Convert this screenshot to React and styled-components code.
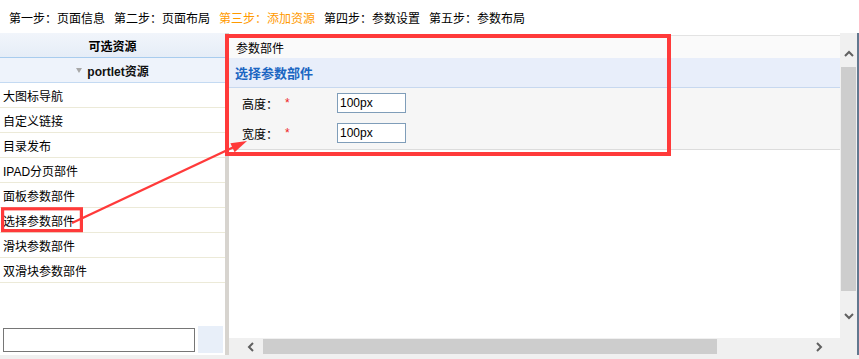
import styled, { createGlobalStyle } from "styled-components";

const GlobalStyle = createGlobalStyle`
  html, body {
    margin: 0;
    padding: 0;
    background: #fff;
  }
  body {
    font-family: "Liberation Sans", "Noto Sans CJK SC", sans-serif;
    font-size: 12px;
    color: #000;
  }
  * { box-sizing: border-box; }
`;

const steps = [
  { label: "第一步：页面信息" },
  { label: "第二步：页面布局" },
  { label: "第三步：添加资源", active: true },
  { label: "第四步：参数设置" },
  { label: "第五步：参数布局" },
];

const resources = [
  "大图标导航",
  "自定义链接",
  "目录发布",
  "IPAD分页部件",
  "面板参数部件",
  "选择参数部件",
  "滑块参数部件",
  "双滑块参数部件",
];

const fields = [
  { label: "高度：", value: "100px" },
  { label: "宽度：", value: "100px" },
];

const Chevron = ({ dir }) => {
  const pts = {
    up: "1,7 5,3 9,7",
    down: "1,3 5,7 9,3",
    left: "7,1 3,5 7,9",
    right: "3,1 7,5 3,9",
  }[dir];
  return (
    <svg width="10" height="10" viewBox="0 0 10 10">
      <polyline points={pts} fill="none" stroke="#606060" strokeWidth="2" />
    </svg>
  );
};

const App = () => {
  return (
    <Page>
      <GlobalStyle />
      <StepBar>
        {steps.map((s) => (
          <Step key={s.label} $active={s.active}>
            {s.label}
          </Step>
        ))}
      </StepBar>

      <Main>
        <LeftPanel>
          <LeftHeader>可选资源</LeftHeader>
          <GroupRow>
            <Caret />
            portlet资源
          </GroupRow>
          {resources.map((r) => (
            <ResItem key={r}>{r}</ResItem>
          ))}
          <SearchRow>
            <SearchInput />
            <SearchBtn />
          </SearchRow>
        </LeftPanel>

        <Divider />

        <RightPanel>
          <Viewport>
            <Content>
              <PanelHeader>参数部件</PanelHeader>
              <PanelTitle>选择参数部件</PanelTitle>
              <Form>
                {fields.map((f) => (
                  <FormRow key={f.label}>
                    <Label>
                      {f.label}
                      <Star>*</Star>
                    </Label>
                    <Field defaultValue={f.value} />
                  </FormRow>
                ))}
              </Form>
            </Content>
            <VScroll>
              <ScrollBtn $h={17}>
                <Chevron dir="up" />
              </ScrollBtn>
              <VThumb />
              <ScrollBtn $h={17}>
                <Chevron dir="down" />
              </ScrollBtn>
            </VScroll>
          </Viewport>
          <HScrollRow>
            <HScroll>
              <HBtn>
                <Chevron dir="left" />
              </HBtn>
              <HThumb />
              <HBtn $push>
                <Chevron dir="right" />
              </HBtn>
            </HScroll>
            <Corner />
          </HScrollRow>
        </RightPanel>
      </Main>
      <BottomStrip />

      <Annotations width="859" height="359" viewBox="0 0 859 359">
        <rect x="227" y="36" width="442" height="118" fill="none" stroke="#ff3a3a" strokeWidth="4" />
        <rect x="2.6" y="208.8" width="78.8" height="21.8" fill="none" stroke="#ff3a3a" strokeWidth="3.2" />
        <line x1="72" y1="223" x2="236" y2="146" stroke="#ff3a3a" strokeWidth="2.4" />
        <polygon points="247,141 234.6,152.3 230.4,143.3" fill="#ff3a3a" />
      </Annotations>
    </Page>
  );
};

export default App;

const Page = styled.div`
  position: relative;
  width: 859px;
  height: 359px;
  overflow: hidden;
  background: #fff;
`;

const StepBar = styled.div`
  height: 33px;
  display: flex;
  align-items: center;
  gap: 9px;
  padding: 4px 0 0 9px;
  white-space: nowrap;
`;

const Step = styled.span`
  width: 96px;
  line-height: 16px;
  color: ${(p) => (p.$active ? "#ff9a00" : "#000")};
`;

const Main = styled.div`
  display: flex;
  height: 322px;
`;

const LeftPanel = styled.div`
  width: 225px;
  display: flex;
  flex-direction: column;
  background: #fff;
`;

const LeftHeader = styled.div`
  height: 25px;
  display: flex;
  align-items: center;
  justify-content: center;
  font-weight: bold;
  background: linear-gradient(#f1f5fb, #e5edf7);
  border-bottom: 1px solid #a8ccee;
`;

const GroupRow = styled.div`
  height: 25px;
  display: flex;
  align-items: center;
  justify-content: center;
  gap: 5px;
  font-weight: bold;
  color: #111;
  background: #eef3fb;
  border-bottom: 1px solid #c4daf2;
`;

const Caret = styled.span`
  width: 0;
  height: 0;
  border-left: 3.5px solid transparent;
  border-right: 3.5px solid transparent;
  border-top: 5px solid #a8a8a8;
  margin-top: 1px;
`;

const ResItem = styled.div`
  height: 25px;
  display: flex;
  align-items: center;
  padding-left: 3px;
  border-bottom: 1px solid #ecead8;
`;

const SearchRow = styled.div`
  margin-top: auto;
  display: flex;
  align-items: center;
  gap: 3px;
  padding: 0 2px 2px 3px;
`;

const SearchInput = styled.input`
  width: 192px;
  height: 24px;
  border: 1px solid #767676;
  padding: 0 3px;
  outline: none;
`;

const SearchBtn = styled.div`
  width: 25px;
  height: 27px;
  background: #e8eff9;
`;

const Divider = styled.div`
  width: 4px;
  background: #d7d4cf;
`;

const RightPanel = styled.div`
  flex: 1;
  display: flex;
  flex-direction: column;
  border-right: 2px solid #62788f;
`;

const Viewport = styled.div`
  height: 305px;
  display: flex;
`;

const Content = styled.div`
  flex: 1;
  background: #fff;
  padding-top: 2px;
`;

const PanelHeader = styled.div`
  height: 23px;
  display: flex;
  align-items: center;
  padding-left: 7px;
  background: #fafafa;
  border-top: 1px solid #e3e3e3;
`;

const PanelTitle = styled.div`
  height: 30px;
  display: flex;
  align-items: center;
  padding-left: 6px;
  font-size: 13px;
  font-weight: bold;
  color: #1b66c2;
  background: #e8eefa;
  border-bottom: 1px solid #c7d8ef;
`;

const Form = styled.div`
  background: #f6f6f6;
  border-bottom: 1px solid #dcdcdc;
  padding-bottom: 1px;
`;

const FormRow = styled.div`
  height: 30px;
  display: flex;
  align-items: center;
  padding-left: 13px;
`;

const Label = styled.span`
  width: 95px;
  display: flex;
  align-items: center;
`;

const Star = styled.span`
  color: #ee2222;
  margin-left: 7px;
`;

const Field = styled.input`
  width: 69px;
  height: 20px;
  border: 1px solid #7f9db9;
  padding: 0 2px;
  font-family: "Liberation Sans", sans-serif;
  font-size: 12px;
  color: #000;
  background: #fff;
  outline: none;
`;

const VScroll = styled.div`
  width: 17px;
  display: flex;
  flex-direction: column;
  align-items: center;
  padding-top: 12px;
  background: #f0f0f0;
`;

const ScrollBtn = styled.div`
  width: 17px;
  height: ${(p) => p.$h}px;
  display: flex;
  align-items: center;
  justify-content: center;
`;

const VThumb = styled.div`
  width: 15px;
  height: 224px;
  margin: 5px 0 16px;
  background: #cdcdcd;
`;

const HScrollRow = styled.div`
  height: 17px;
  display: flex;
`;

const HScroll = styled.div`
  flex: 1;
  display: flex;
  align-items: center;
  padding-left: 13px;
  background: #f0f0f0;
`;

const HBtn = styled.div`
  width: 17px;
  height: 17px;
  display: flex;
  align-items: center;
  justify-content: center;
  margin-left: ${(p) => (p.$push ? "auto" : "0")};
  margin-right: ${(p) => (p.$push ? "13px" : "0")};
`;

const HThumb = styled.div`
  width: 454px;
  height: 15px;
  margin-left: 4px;
  background: #cdcdcd;
`;

const Corner = styled.div`
  width: 17px;
  background: #f0f0f0;
`;

const BottomStrip = styled.div`
  height: 4px;
  background: #f0f0f0;
`;

const Annotations = styled.svg`
  position: absolute;
  left: 0;
  top: 0;
  pointer-events: none;
`;
